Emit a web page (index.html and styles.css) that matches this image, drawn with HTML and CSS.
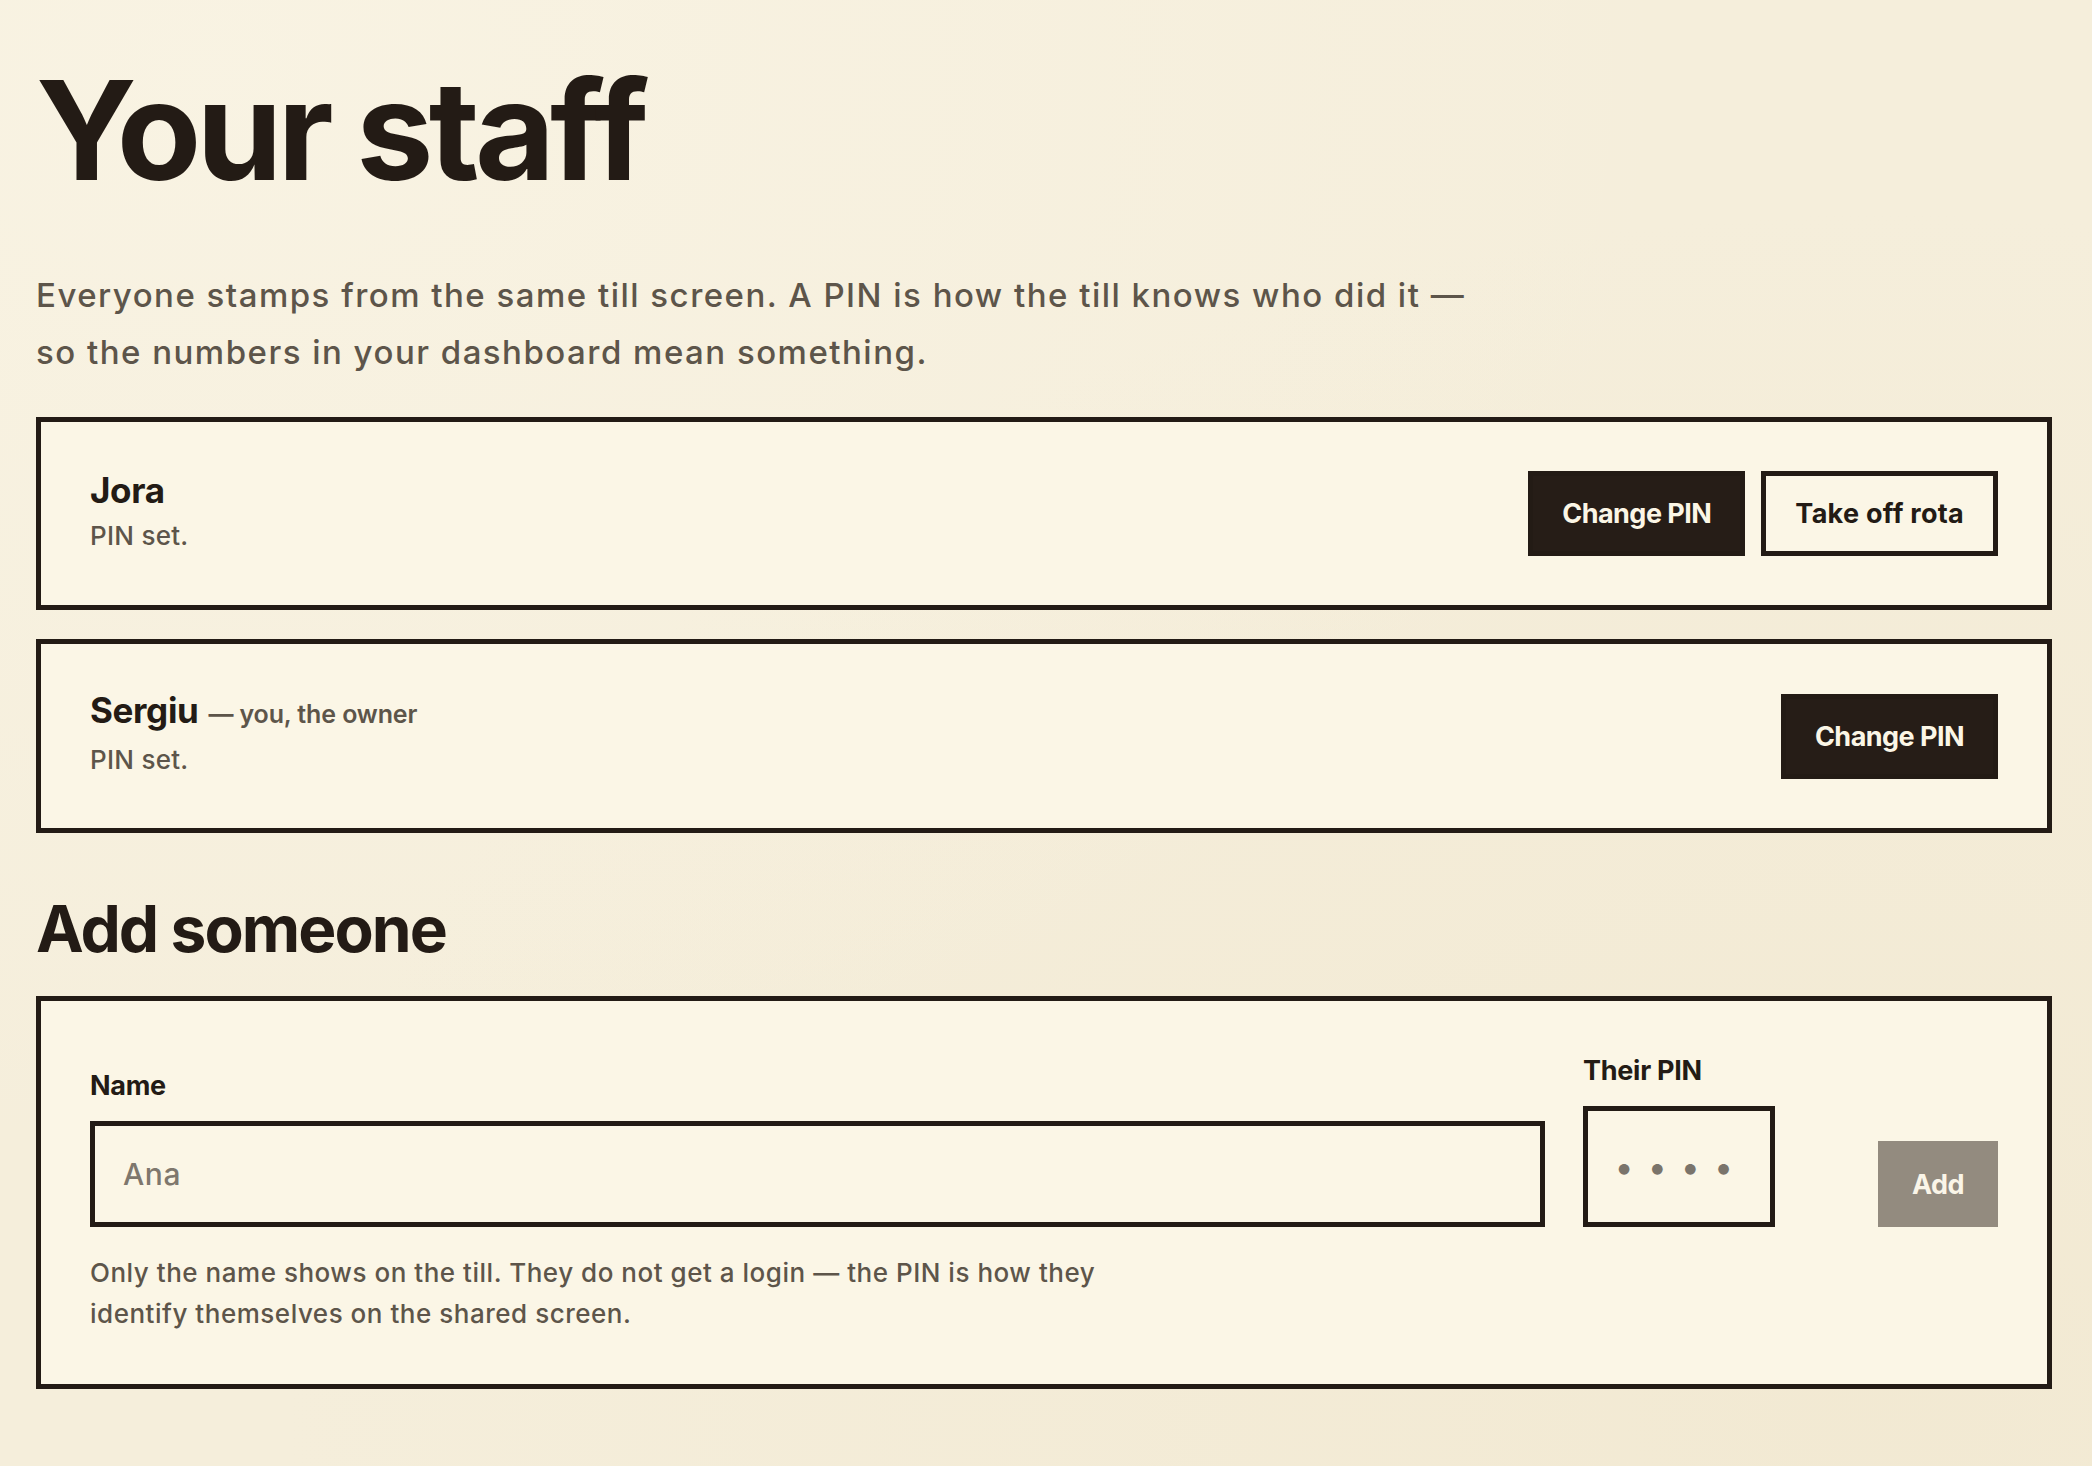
FILE: index.html
```html
<!DOCTYPE html>
<html lang="en">
<head>
<meta charset="utf-8">
<title>Your staff</title>
<link rel="stylesheet" href="styles.css">
</head>
<body>
<main class="page">
  <h1 class="title">Your staff</h1>
  <p class="lede">Everyone stamps from the same till screen. A PIN is how the till knows who did it — so the numbers in your dashboard mean something.</p>

  <ul class="staff-list">
    <li class="staff-card">
      <div class="staff-info">
        <div class="staff-name">Jora</div>
        <div class="staff-status">PIN set.</div>
      </div>
      <div class="staff-actions">
        <button class="btn btn-dark" type="button">Change PIN</button>
        <button class="btn btn-outline" type="button">Take off rota</button>
      </div>
    </li>
    <li class="staff-card">
      <div class="staff-info">
        <div class="staff-name">Sergiu <span class="staff-note">— you, the owner</span></div>
        <div class="staff-status">PIN set.</div>
      </div>
      <div class="staff-actions">
        <button class="btn btn-dark" type="button">Change PIN</button>
      </div>
    </li>
  </ul>

  <h2 class="section-title">Add someone</h2>
  <form class="add-card">
    <div class="add-row">
      <label class="field">
        <span class="field-label">Name</span>
        <input class="input input-name" type="text" placeholder="Ana">
      </label>
      <label class="field">
        <span class="field-label">Their PIN</span>
        <input class="input input-pin" type="password" placeholder="••••">
      </label>
      <button class="btn btn-add" type="submit" disabled>Add</button>
    </div>
    <p class="help">Only the name shows on the till. They do not get a login — the PIN is how they identify themselves on the shared screen.</p>
  </form>
</main>
</body>
</html>
```

FILE: styles.css
```css
* { box-sizing: border-box; }

html, body {
  margin: 0;
  padding: 0;
}

body {
  min-height: 1466px;
  background-color: #f5eedb;
  background-image:
    radial-gradient(ellipse at 10% 5%, rgba(250, 245, 230, 0.7), rgba(250, 245, 230, 0) 55%),
    radial-gradient(ellipse at 90% 95%, rgba(240, 230, 205, 0.6), rgba(240, 230, 205, 0) 60%);
  color: #231b15;
  font-family: "Inter", "Noto Sans", "Liberation Sans", sans-serif;
}

.page {
  padding: 61px 40px 60px 36px;
}

.title {
  margin: 0;
  font-size: 138px;
  line-height: 1;
  font-weight: 700;
  letter-spacing: -0.036em;
  color: #231b15;
}

.lede {
  margin: 68px 0 0;
  max-width: 1450px;
  font-size: 33px;
  line-height: 56.6px;
  font-weight: 500;
  letter-spacing: 0.045em;
  color: #5d554a;
}

.staff-list {
  list-style: none;
  margin: 37px 0 0;
  padding: 0;
  display: flex;
  flex-direction: column;
  gap: 29px;
}

.staff-card {
  display: flex;
  align-items: center;
  justify-content: space-between;
  border: 5px solid #231b15;
  background: #fbf6e6;
  padding: 49px 49px;
}

.staff-name {
  font-size: 35px;
  line-height: 34px;
  font-weight: 700;
  letter-spacing: -0.01em;
  color: #231b15;
}

.staff-note {
  font-size: 25px;
  font-weight: 600;
  letter-spacing: -0.005em;
  color: #5d554a;
  margin-left: 2px;
}

.staff-status {
  margin-top: 10px;
  font-size: 26px;
  line-height: 38px;
  font-weight: 500;
  letter-spacing: 0.01em;
  color: #5d554a;
}

.staff-actions {
  display: flex;
  gap: 16px;
}

.btn {
  font-family: inherit;
  font-size: 27px;
  font-weight: 700;
  letter-spacing: -0.02em;
  height: 85px;
  padding: 0 29px;
  border: 5px solid #231b15;
  border-radius: 0;
  cursor: pointer;
}

.btn-dark {
  background: #261d17;
  color: #fbf6e6;
}

.btn-outline {
  background: transparent;
  color: #231b15;
  letter-spacing: 0.01em;
}

.section-title {
  margin: 64px 0 0;
  font-size: 64px;
  line-height: 1;
  font-weight: 700;
  letter-spacing: -0.03em;
  color: #231b15;
}

.add-card {
  margin: 35px 0 0;
  border: 5px solid #231b15;
  background: #fbf6e6;
  padding: 50px 49px 50px;
}

.add-row {
  display: grid;
  grid-template-columns: 1fr 192px 185px;
  column-gap: 38px;
  align-items: end;
}

.field {
  display: flex;
  flex-direction: column;
}

.field-label {
  font-size: 27px;
  line-height: 40.5px;
  font-weight: 700;
  letter-spacing: -0.01em;
  color: #231b15;
  margin-bottom: 14.5px;
}

.input {
  font-family: inherit;
  font-size: 30px;
  font-weight: 500;
  color: #231b15;
  background: #fbf6e6;
  border: 5px solid #231b15;
  border-radius: 0;
  outline: none;
}

.input::placeholder {
  color: #7e776d;
  opacity: 1;
}

.input-name {
  height: 106px;
  width: 100%;
  padding: 0 28px;
  letter-spacing: 0.02em;
}

.input-pin {
  height: 121px;
  width: 192px;
  padding: 0 0 0 27px;
  font-size: 34px;
  letter-spacing: 15px;
}

.input-pin::placeholder {
  color: #7a746b;
}

.btn-add {
  justify-self: end;
  width: 120px;
  height: 86px;
  padding: 0;
  border: none;
  background: #938b7f;
  color: #faf5e8;
  cursor: default;
}

.help {
  margin: 25px 0 0;
  max-width: 1035px;
  font-size: 26px;
  line-height: 41px;
  font-weight: 500;
  letter-spacing: 0.02em;
  color: #5d554a;
}
```
